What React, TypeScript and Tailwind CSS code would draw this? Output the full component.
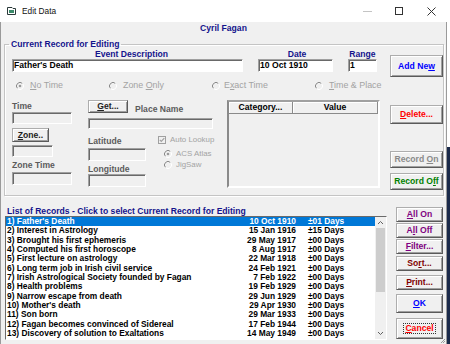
import React from "react";

const NAVY = "text-[#14148c]";

function Radio({ checked }: { checked?: boolean }) {
  return (
    <svg width="8" height="8" viewBox="0 0 8 8" className="shrink-0">
      <path d="M6.5 1.5 A3.5 3.5 0 0 0 1.5 6.5" stroke="#8a8a8a" fill="none" strokeWidth="1" />
      <path d="M1.5 6.5 A3.5 3.5 0 0 0 6.5 1.5" stroke="#ffffff" fill="none" strokeWidth="1" />
      {checked && <circle cx="4" cy="4" r="1.3" fill="#9a9a9a" />}
    </svg>
  );
}

function Check() {
  return (
    <svg width="8" height="8" viewBox="0 0 8 8" className="shrink-0">
      <rect x="0.5" y="0.5" width="7" height="7" fill="#f0f0f0" stroke="#a0a0a0" />
      <path d="M1.8 3.8 L3.3 5.4 L6.3 2.2" stroke="#a0a0a0" strokeWidth="1.2" fill="none" />
    </svg>
  );
}

function Field({ className = "", white = false, children }: { className?: string; white?: boolean; children?: React.ReactNode }) {
  return (
    <div
      className={`border border-t-[#a0a0a0] border-l-[#a0a0a0] border-b-white border-r-white shadow-[inset_1px_1px_0_#696969] ${white ? "bg-white" : "bg-[#f0f0f0]"} ${className}`}
    >
      {children}
    </div>
  );
}

function Btn({ className = "", children }: { className?: string; children?: React.ReactNode }) {
  return (
    <div
      className={`flex items-center justify-center border border-[#adadad] border-r-[#5a5a5a] border-b-[#5a5a5a] bg-[#f0f0f0] shadow-[inset_1px_1px_0_#fff,inset_-1px_-1px_0_#a0a0a0] font-bold text-[8.6px] leading-none whitespace-nowrap ${className}`}
    >
      {children}
    </div>
  );
}

const rows: [string, string, string][] = [
  ["1) Father's Death", "10 Oct 1910", "±01 Days"],
  ["2) Interest in Astrology", "15 Jan 1916", "±15 Days"],
  ["3) Brought his first ephemeris", "29 May 1917", "±00 Days"],
  ["4) Computed his first horoscope", "8 Aug 1917", "±00 Days"],
  ["5) First lecture on astrology", "22 Mar 1918", "±00 Days"],
  ["6) Long term job in Irish civil service", "24 Feb 1921", "±00 Days"],
  ["7) Irish Astrological Society founded by Fagan", "7 Feb 1922", "±00 Days"],
  ["8) Health problems", "19 Feb 1929", "±00 Days"],
  ["9) Narrow escape from death", "29 Jun 1929", "±00 Days"],
  ["10) Mother's death", "29 Apr 1930", "±00 Days"],
  ["11) Son born", "29 Mar 1933", "±00 Days"],
  ["12) Fagan becomes convinced of Sidereal", "17 Feb 1944", "±00 Days"],
  ["13) Discovery of solution to Exaltations", "14 May 1949", "±00 Days"],
];

export default function App() {
  return (
    <div className="w-[450px] h-[344px] overflow-hidden flex flex-col bg-white font-['Liberation_Sans',Arial,sans-serif] text-black">
      {/* Title bar */}
      <div className="h-[22px] shrink-0 flex items-center bg-white">
        <svg width="9" height="8" viewBox="0 0 9 8" className="ml-[7px]">
          <path d="M0.5 0.5 H5 L6 1.5 H8.5 V7.5 H0.5 Z" fill="#ffffff" stroke="#2a3a3a" />
          <path d="M2 3 H7 V6 H2 Z" fill="#3a8a6a" />
        </svg>
        <span className="ml-[6px] text-[8.3px] leading-none text-[#111]">Edit Data</span>
        <div className="ml-auto mr-[3px] flex">
          <div className="w-[32px] h-[22px] flex items-center justify-center">
            <div className="w-[9px] h-px bg-[#c4c4c4]" />
          </div>
          <div className="w-[32px] h-[22px] flex items-center justify-center">
            <div className="w-[8px] h-[8px] border border-[#333]" />
          </div>
          <div className="w-[32px] h-[22px] flex items-center justify-center">
            <svg width="9" height="9" viewBox="0 0 9 9">
              <path d="M0.5 0.5 L8.5 8.5 M8.5 0.5 L0.5 8.5" stroke="#333" strokeWidth="1" />
            </svg>
          </div>
        </div>
      </div>

      <div className="flex flex-1 min-h-0">
        {/* Window body */}
        <div className="relative w-[447px] flex flex-col bg-[#f0f0f0] border-l border-r border-[#9a9a9a]">
          <div className={`h-[17px] shrink-0 text-center font-bold text-[8.6px] leading-[13px] ${NAVY}`}>Cyril Fagan</div>

          <fieldset className="ml-[3px] w-[440px] border border-[#c4c4c4] shadow-[inset_1px_1px_0_#fff,1px_1px_0_#fff] pb-[5px]">
            <legend className={`ml-[4px] px-[2px] font-bold text-[8.6px] leading-[11px] ${NAVY}`}>Current Record for Editing</legend>
            <div className="flex">
              {/* main left */}
              <div className="w-[385px] flex flex-col">
                <div className="flex">
                  <div className="ml-[7px] w-[231px] flex flex-col">
                    <div className={`h-[9px] pl-[8px] text-center font-bold text-[8.6px] leading-[9px] ${NAVY}`}>Event Description</div>
                    <Field white className="h-[13px] pl-[1px] font-bold text-[8.6px] leading-[11px]">Father's Death</Field>
                  </div>
                  <div className="ml-[15px] w-[75px] flex flex-col">
                    <div className={`h-[9px] pl-[3px] text-center font-bold text-[8.6px] leading-[9px] ${NAVY}`}>Date</div>
                    <Field white className="h-[13px] pl-[1px] font-bold text-[8.6px] leading-[11px]">10 Oct 1910</Field>
                  </div>
                  <div className="ml-[15px] w-[29px] flex flex-col">
                    <div className={`h-[9px] text-center font-bold text-[8.6px] leading-[9px] whitespace-nowrap ${NAVY}`}>Range</div>
                    <Field white className="h-[13px] pl-[1px] font-bold text-[8.6px] leading-[11px]">1</Field>
                  </div>
                </div>

                {/* radio row */}
                <div className="mt-[8px] h-[11px] flex items-center text-[8.9px] leading-none text-[#a3a3a3]">
                  <div className="ml-[11px] w-[93px] flex items-center gap-[6px]">
                    <Radio checked />
                    <span><u>N</u>o Time</span>
                  </div>
                  <div className="w-[103px] flex items-center gap-[6px]">
                    <Radio />
                    <span>Zone <u>O</u>nly</span>
                  </div>
                  <div className="w-[103px] flex items-center gap-[4px]">
                    <Radio />
                    <span>E<u>x</u>act Time</span>
                  </div>
                  <div className="flex items-center gap-[6px]">
                    <Radio />
                    <span><u>T</u>ime &amp; Place</span>
                  </div>
                </div>

                {/* lower area */}
                <div className="flex">
                  <div className="ml-[7px] w-[61px] flex flex-col">
                    <div className="mt-[10px] h-[10px] leading-[10px] font-bold text-[8.6px] text-[#5c5c5c]">Time</div>
                    <Field className="mt-[1px] h-[12px] w-[60px]" />
                    <Btn className="mt-[4px] h-[14px] w-[37px] text-[#222]"><span><u>Z</u>one..</span></Btn>
                    <Field className="mt-[3px] h-[12px] w-[41px]" />
                    <div className="mt-[3px] h-[10px] leading-[10px] font-bold text-[8.6px] text-[#5c5c5c]">Zone Time</div>
                    <Field className="mt-[2px] h-[13px] w-[60px]" />
                  </div>

                  <div className="ml-[15px] w-[126px] flex flex-col">
                    <div className="mt-[9px] flex items-start">
                      <Btn className="h-[13px] w-[40px] text-[#222]"><span><u>G</u>et...</span></Btn>
                      <div className="ml-[7px] mt-[4px] h-[10px] leading-[10px] font-bold text-[8.6px] text-[#5c5c5c] whitespace-nowrap">Place Name</div>
                    </div>
                    <Field className="mt-[4px] h-[11px] w-[125px]" />
                    <div className="flex">
                      <div className="w-[58px] flex flex-col">
                        <div className="mt-[7px] h-[10px] leading-[10px] font-bold text-[8.6px] text-[#5c5c5c]">Latitude</div>
                        <Field className="mt-[2px] h-[13px] w-[58px]" />
                        <div className="mt-[3px] h-[10px] leading-[10px] font-bold text-[8.6px] text-[#5c5c5c]">Longitude</div>
                        <Field className="h-[13px] w-[58px]" />
                      </div>
                      <div className="ml-[12px] flex flex-col text-[7.9px] leading-none text-[#a3a3a3] whitespace-nowrap">
                        <div className="mt-[6px] h-[10px] flex items-center gap-[4px]">
                          <Check />
                          <span>Auto Lookup</span>
                        </div>
                        <div className="ml-[6px] mt-[4px] h-[10px] flex items-center gap-[4px]">
                          <Radio checked />
                          <span>ACS Atlas</span>
                        </div>
                        <div className="ml-[6px] mt-[1px] h-[10px] flex items-center gap-[4px]">
                          <Radio />
                          <span>JigSaw</span>
                        </div>
                      </div>
                    </div>
                  </div>

                  <div className="ml-[13px] mt-[9px] w-[153px] h-[88px] flex flex-col border-2 border-t-[#a0a0a0] border-l-[#8a8a8a] border-b-white border-r-white bg-[#f0f0f0]">
                    <div className="h-[12px] flex font-bold text-[8.6px] leading-none">
                      <div className="w-[64px] flex items-center justify-center border-r border-b border-r-[#8a8a8a] border-b-[#8a8a8a] shadow-[inset_1px_1px_0_#fff]">Category...</div>
                      <div className="flex-1 flex items-center justify-center border-r border-b border-r-[#8a8a8a] border-b-[#8a8a8a] shadow-[inset_1px_1px_0_#fff]">Value</div>
                    </div>
                  </div>
                </div>
              </div>

              {/* right buttons */}
              <div className="w-[53px] flex flex-col">
                <Btn className="mt-[5px] h-[22px] text-[#0000ff]"><span>Add Ne<u>w</u></span></Btn>
                <Btn className="mt-[28px] h-[19px] text-[#ff0000]"><span><u>D</u>elete...</span></Btn>
                <Btn className="mt-[27px] h-[17px] text-[#8a8a8a]"><span>Record <u>O</u>n</span></Btn>
                <Btn className="mt-[5px] h-[17px] text-[#008000]"><span>Record O<u>f</u>f</span></Btn>
              </div>
            </div>
          </fieldset>

          {/* list area */}
          <div className="flex">
            <div className="ml-[4px] w-[382px] flex flex-col">
              <div className={`mt-[9.5px] h-[10px] pl-[2px] leading-[10px] font-bold text-[8.6px] whitespace-nowrap ${NAVY}`}>
                List of Records - Click to select Current Record for Editing
              </div>
              <div className="mt-[0.5px] h-[124px] flex border border-t-[#6a6a6a] border-l-[#6a6a6a] border-b-white border-r-white bg-white">
                <div className="w-[369px] flex flex-col font-bold text-[8.4px]">
                  {rows.map((r, i) => (
                    <div
                      key={i}
                      className={`h-[9.33px] leading-[9.33px] flex whitespace-nowrap ${i === 0 ? "bg-[#0078d7] text-white" : "text-black"}`}
                    >
                      <span className="w-[238px] pl-[1px]">{r[0]}</span>
                      <span className="w-[52px] text-right">{r[1]}</span>
                      <span className="ml-[12px]">{r[2]}</span>
                    </div>
                  ))}
                </div>
                <div className="w-[11px] flex flex-col bg-[#f0f0f0]">
                  <div className="h-[11px] flex items-center justify-center">
                    <svg width="7" height="5" viewBox="0 0 7 5"><path d="M1 4 L3.5 1.5 L6 4" stroke="#606060" fill="none" strokeWidth="1" /></svg>
                  </div>
                  <div className="h-[64px] mx-[1px] bg-[#cdcdcd]" />
                  <div className="flex-1" />
                  <div className="h-[11px] flex items-center justify-center">
                    <svg width="7" height="5" viewBox="0 0 7 5"><path d="M1 1 L3.5 3.5 L6 1" stroke="#606060" fill="none" strokeWidth="1" /></svg>
                  </div>
                </div>
              </div>
            </div>

            <div className="ml-[9px] w-[47px] flex flex-col">
              <Btn className="mt-[11px] h-[15px] text-[#800080]"><span><u>A</u>ll On</span></Btn>
              <Btn className="mt-[1px] h-[15px] text-[#800080]"><span>A<u>l</u>l Off</span></Btn>
              <Btn className="mt-[1px] h-[15px] text-[#800080]"><span><u>F</u>ilter...</span></Btn>
              <Btn className="mt-[2px] h-[15px] text-[#800000]"><span>So<u>r</u>t...</span></Btn>
              <Btn className="mt-[4px] h-[15px] text-[#800000]"><span><u>P</u>rint...</span></Btn>
              <Btn className="mt-[4px] h-[19px] text-[#0000ff]"><span><u>O</u>K</span></Btn>
              <Btn className="mt-[5px] h-[21px] text-[#ff0000] border-[#000] border-r-[#000] border-b-[#000]">
                <span className="px-[1px] border border-dotted border-[#333]"><u>C</u>ancel</span>
              </Btn>
            </div>
          </div>

          <svg width="6" height="6" viewBox="0 0 6 6" className="absolute right-[0px] bottom-[0px]">
            <path d="M5 1 L1 5 M5 3 L3 5" stroke="#9a9a9a" strokeWidth="1" />
          </svg>
        </div>

        {/* desktop strip */}
        <div className="flex-1 flex flex-col">
          <div className="h-[125px] bg-white" />
          <div className="flex-1 bg-[#1b2a4a]" />
        </div>
      </div>
    </div>
  );
}
